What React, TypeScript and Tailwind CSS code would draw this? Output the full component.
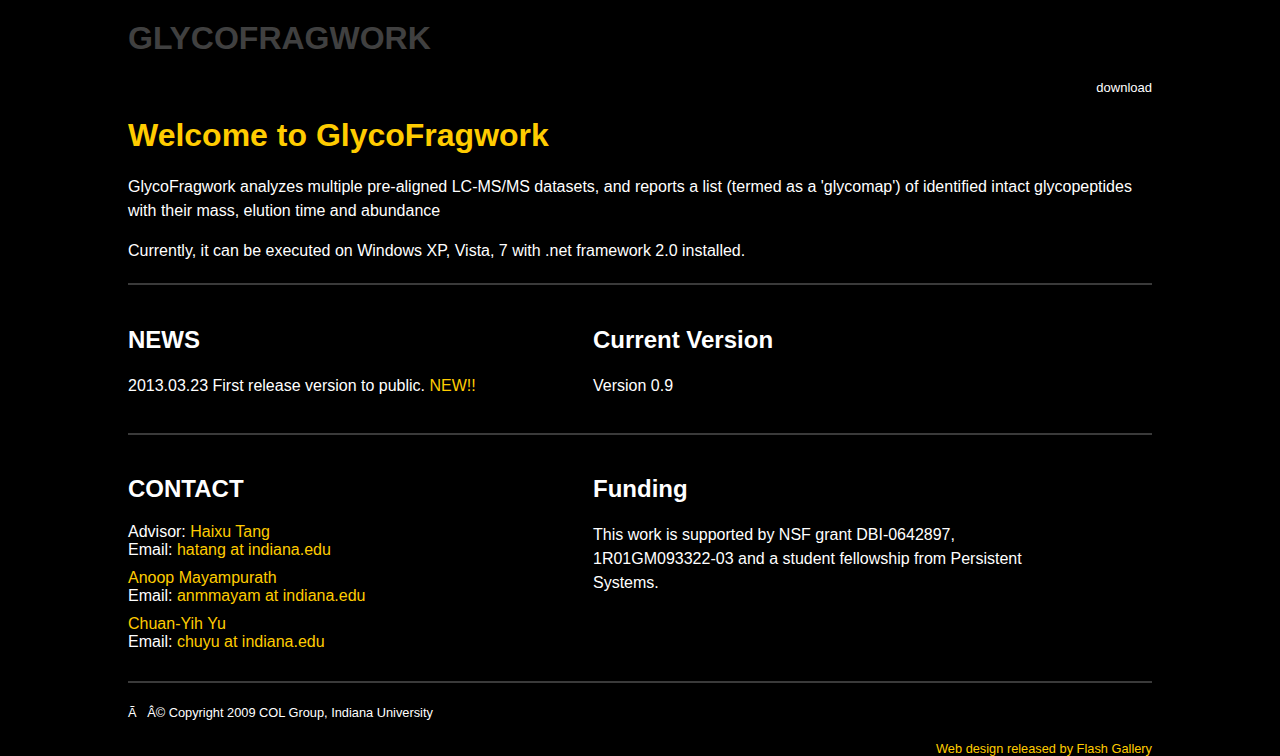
export default function App() {
  return (
    <div className="min-h-[756px] bg-black text-white font-['Liberation_Sans',Arial,sans-serif]">
      <div className="w-[1024px] mx-auto">
        <header className="pt-[20px]">
          <h1 className="text-[32px] leading-[37px] font-bold text-[#404040]">GLYCOFRAGWORK</h1>
          <nav className="mt-[23px] flex justify-end text-[13px] leading-[15px]">
            <a href="#" className="text-white">download</a>
          </nav>
        </header>

        <section className="mt-[22px]">
          <h2 className="text-[32px] leading-[37px] font-bold text-[#ffcc00]">Welcome to GlycoFragwork</h2>
          <p className="mt-[21px] text-[16px] leading-[24px]">
            GlycoFragwork analyzes multiple pre-aligned LC-MS/MS datasets, and reports a list (termed as a 'glycomap') of identified intact glycopeptides with their mass, elution time and abundance
          </p>
          <p className="mt-[16px] text-[16px] leading-[24px]">
            Currently, it can be executed on Windows XP, Vista, 7 with .net framework 2.0 installed.
          </p>
        </section>

        <hr className="mt-[20px] border-0 h-[2px] bg-[#3a3a3a]" />

        <section className="grid grid-cols-[465px_1fr] pt-[41px] pb-[35px]">
          <div>
            <h3 className="text-[24px] leading-[28px] font-bold">NEWS</h3>
            <p className="mt-[20px] text-[16px] leading-[24px]">
              2013.03.23 First release version to public. <span className="text-[#ffcc00]">NEW!!</span>
            </p>
          </div>
          <div>
            <h3 className="text-[24px] leading-[28px] font-bold">Current Version</h3>
            <p className="mt-[20px] text-[16px] leading-[24px]">Version 0.9</p>
          </div>
        </section>

        <hr className="border-0 h-[2px] bg-[#3a3a3a]" />

        <section className="grid grid-cols-[465px_1fr] pt-[40px] pb-[30px]">
          <div>
            <h3 className="text-[24px] leading-[28px] font-bold">CONTACT</h3>
            <div className="mt-[20px] flex flex-col gap-[10px] text-[16px] leading-[18px]">
              <p>
                Advisor: <a href="#" className="text-[#ffcc00]">Haixu Tang</a>
                <br />
                Email: <a href="#" className="text-[#ffcc00]">hatang at indiana.edu</a>
              </p>
              <p>
                <a href="#" className="text-[#ffcc00]">Anoop Mayampurath</a>
                <br />
                Email: <a href="#" className="text-[#ffcc00]">anmmayam at indiana.edu</a>
              </p>
              <p>
                <a href="#" className="text-[#ffcc00]">Chuan-Yih Yu</a>
                <br />
                Email: <a href="#" className="text-[#ffcc00]">chuyu at indiana.edu</a>
              </p>
            </div>
          </div>
          <div>
            <h3 className="text-[24px] leading-[28px] font-bold">Funding</h3>
            <p className="mt-[20px] w-[440px] text-[16px] leading-[24px]">
              This work is supported by NSF grant DBI-0642897, 1R01GM093322-03 and a student fellowship from Persistent Systems.
            </p>
          </div>
        </section>

        <hr className="border-0 h-[2px] bg-[#3a3a3a]" />

        <footer className="pt-[22px] text-[12.8px] leading-[15px]">
          <p>Ã&nbsp;&nbsp;&nbsp;Â© Copyright 2009 COL Group, Indiana University</p>
          <p className="mt-[21px] text-right text-[#ffcc00]">Web design released by Flash Gallery</p>
        </footer>
      </div>
    </div>
  );
}
